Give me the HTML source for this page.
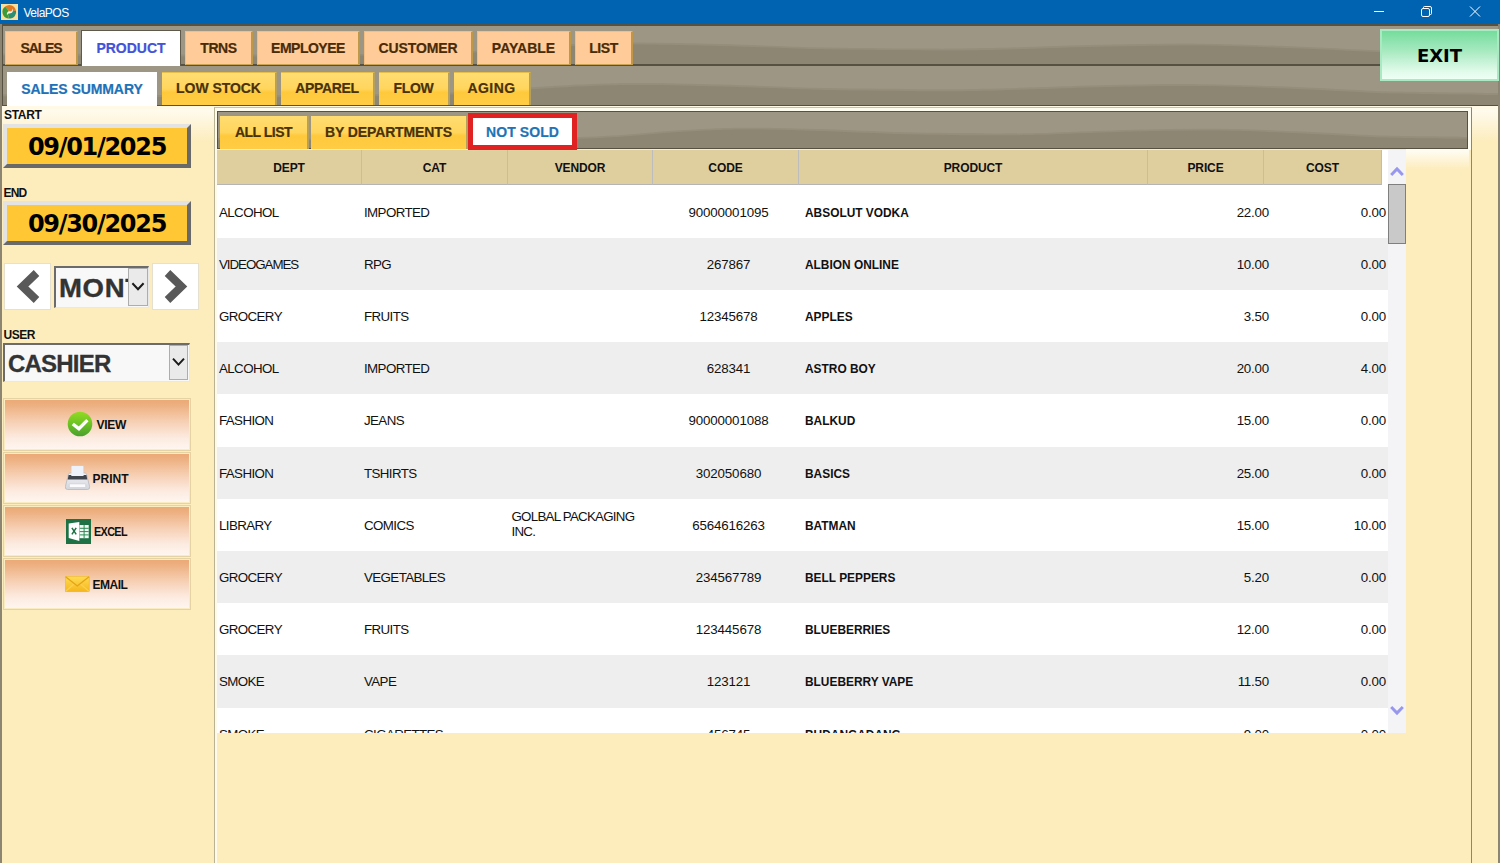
<!DOCTYPE html>
<html>
<head>
<meta charset="utf-8">
<title>VelaPOS</title>
<style>
*{box-sizing:border-box;margin:0;padding:0}
html,body{width:1500px;height:863px;overflow:hidden;background:#FDEDBD;font-family:"Liberation Sans",sans-serif;}
.abs{position:absolute}
#titlebar{position:absolute;left:0;top:0;width:1500px;height:24px;background:#0063B1;color:#fff;font-size:12px;}
#titlebar .ttl{position:absolute;left:23.5px;top:6px;font-size:12px;letter-spacing:-0.5px;}
.strip{position:absolute;overflow:hidden;background:#8D8673;}
.strip svg{position:absolute;left:0;top:0;width:100%;height:100%;}
.tab{position:absolute;font-weight:bold;text-align:center;white-space:nowrap;color:#4A2B08;-webkit-text-stroke:0.2px currentColor;}
.t1{top:31px;height:34px;background:#FFCC99;border-style:solid;border-width:1px 2px 1px 1px;border-color:#F3BE84 #BF9748 #C9A253 #F3BE84;font-size:14px;line-height:33px;}
.t1.sel{background:#fff;border:1px solid #5E594A;border-bottom:none;color:#4353D8;top:30px;height:36px;line-height:35px}
.t2{top:72px;height:33px;background:linear-gradient(#FFDD72 0%,#FFD55C 50%,#FFC93C 60%,#FFCC44 100%);border-right:2px solid #B5A05E;border-top:1px solid #E8BE4A;font-size:14px;line-height:31px;color:#4A3208;}
.t2.sel{background:#fff;color:#1E72B8;border:none;height:34px;line-height:34px}
.t3{top:116px;height:33px;background:linear-gradient(#FFDD72 0%,#FFD55C 50%,#FFC93C 60%,#FFCC44 100%);border-right:2px solid #B5A05E;font-size:14px;line-height:32px;color:#4A3208;}
.lbl{position:absolute;font-weight:bold;font-size:12px;color:#111;letter-spacing:-0.3px}
.datebtn{position:absolute;left:3px;width:188px;height:44px;background:#FFC733;border-style:solid;border-width:4px;border-color:#E3E3E3 #696969 #696969 #E3E3E3;font-family:"DejaVu Sans","Liberation Sans",sans-serif;font-weight:bold;font-size:24px;letter-spacing:-1.3px;text-align:center;line-height:38px;color:#000;}
.navbtn{position:absolute;top:263px;width:47px;height:47px;background:#fff;border:1px solid #E6E0D0;}
.combo{position:absolute;background:#F8F8F8;border-style:solid;border-width:2px 1px 1px 2px;border-color:#6B6B6B #E8E8E8 #E8E8E8 #6B6B6B;overflow:hidden;font-weight:bold;color:#333;white-space:nowrap}
.dd{position:absolute;background:#EAEAEA;border:1px solid #ADADAD;}
.act{position:absolute;left:3px;width:188px;height:52px;border:1px solid #E6D3A3;box-shadow:inset 0 0 0 1px #FBEBC0;background:linear-gradient(#EBA874 0%,#EDB080 12%,#F6D0B4 45%,#FCEADF 75%,#FFF7F2 100%);}
.act span{position:absolute;font-weight:bold;font-size:12px;color:#111;top:19px;transform-origin:0 50%;white-space:nowrap}
#tbl{position:absolute;left:217px;top:150px;width:1189px;height:583px;background:#fff;overflow:hidden;}
.hd{position:absolute;top:0;height:35px;background:#DFCE9E;border-bottom:1px solid #B5B5B5;border-right:1px solid #BDBDBD;font-weight:bold;font-size:12px;letter-spacing:-0.1px;text-align:center;line-height:36px;color:#111}
.row{position:absolute;left:0;width:1171px;height:52px;font-size:13.33px;color:#111;}
.row.g{background:#EEEEEE}
.row div{position:absolute;top:1px;height:52px;line-height:52px;white-space:nowrap}
.c1{left:2px;letter-spacing:-0.6px}.c2{left:147px;letter-spacing:-0.6px}.c3{left:294.5px;line-height:15.4px !important;top:9.5px !important;white-space:normal !important;width:140px;letter-spacing:-0.6px}
.c4{left:438.5px;width:146px;text-align:center;letter-spacing:-0.15px}
.c5{left:587.5px;font-weight:bold;transform:scaleX(0.893);transform-origin:0 50%}
.c6{left:930px;width:122px;text-align:right;letter-spacing:-0.2px}
.c7{left:1046px;width:123px;text-align:right;letter-spacing:-0.2px}
</style>
</head>
<body>
<div id="titlebar">
  <svg class="abs" style="left:1px;top:4px" width="17" height="16" viewBox="0 0 17 16">
    <rect width="17" height="16" fill="#F9DE9C"/>
    <path d="M8.5 8 L4.2 2.6 A6.6 6.6 0 0 1 14.9 6.6 Z" fill="#E27A22"/>
    <path d="M8.5 8 L14.9 6.6 A6.6 6.6 0 0 1 7.2 14.5 Z" fill="#2C8F74"/>
    <path d="M8.5 8 L7.2 14.5 A6.6 6.6 0 0 1 4.2 2.6 Z" fill="#3C9A3A"/>
    <path d="M6.2 11.3 C5.2 8.6 7.2 6.8 9 7.4 C10.6 7.9 11.6 6.4 11.2 4.6 C12.6 6.6 11.6 9.3 9.3 9.2 C7.6 9.1 6.4 9.8 6.2 11.3 Z" fill="#F4F7EC"/>
  </svg>
  <div class="ttl">VelaPOS</div>
  <svg class="abs" style="left:1368px;top:0" width="120" height="24" viewBox="0 0 120 24" fill="none" stroke="#fff" stroke-width="1">
    <path d="M6 11.5 H16"/>
    <rect x="53.5" y="8.5" width="8" height="8" rx="1.5"/>
    <path d="M55.5 8.5 V7.5 Q55.5 6.5 56.5 6.5 H62 Q63.5 6.5 63.5 8 V13.5 Q63.5 14.5 62.5 14.5 H61.5"/>
    <path d="M102 6.5 L112 16.5 M112 6.5 L102 16.5"/>
  </svg>
</div>

<!-- strips -->
<div class="abs" style="left:0;top:24px;width:1500px;height:84px;background:#575142"></div>
<div class="strip" style="left:3px;top:26px;width:1495px;height:38px">
  <svg viewBox="0 0 1000 100" preserveAspectRatio="none"><path d="M0 0 H1000 V74.5 C988 73.8 952 73.0 930 70.5 C908 68.0 890 62.7 868 59.5 C846 56.3 822 52.3 800 51.5 C778 50.7 756 52.7 734 54.5 C712 56.3 686 60.8 667 62.5 C648 64.2 640 64.7 620 64.5 C600 64.3 573 63.5 550 61.5 C527 59.5 502 54.7 480 52.5 C458 50.3 438 48.0 420 48.5 C402 49.0 392 51.2 370 55.5 C348 59.8 327 70.3 290 74.5 C253 78.7 198 80.0 150 80.5 C102 81.0 25 78.0 0 77.5 Z" fill="#9D9684" opacity="0.5"/><path d="M0 0 H1000 V69.5 C988 68.8 952 68.0 930 65.5 C908 63.0 890 57.7 868 54.5 C846 51.3 822 47.3 800 46.5 C778 45.7 756 47.7 734 49.5 C712 51.3 686 55.8 667 57.5 C648 59.2 640 59.7 620 59.5 C600 59.3 573 58.5 550 56.5 C527 54.5 502 49.7 480 47.5 C458 45.3 438 43.0 420 43.5 C402 44.0 392 46.2 370 50.5 C348 54.8 327 65.3 290 69.5 C253 73.7 198 75.0 150 75.5 C102 76.0 25 73.0 0 72.5 Z" fill="#9D9684"/></svg>
</div>
<div class="strip" style="left:3px;top:66px;width:1495px;height:39px">
  <svg viewBox="0 0 1000 100" preserveAspectRatio="none"><path d="M0 0 H1000 V74.5 C988 73.8 952 73.0 930 70.5 C908 68.0 890 62.7 868 59.5 C846 56.3 822 52.3 800 51.5 C778 50.7 756 52.7 734 54.5 C712 56.3 686 60.8 667 62.5 C648 64.2 640 64.7 620 64.5 C600 64.3 573 63.5 550 61.5 C527 59.5 502 54.7 480 52.5 C458 50.3 438 48.0 420 48.5 C402 49.0 392 51.2 370 55.5 C348 59.8 327 70.3 290 74.5 C253 78.7 198 80.0 150 80.5 C102 81.0 25 78.0 0 77.5 Z" fill="#9D9684" opacity="0.5"/><path d="M0 0 H1000 V69.5 C988 68.8 952 68.0 930 65.5 C908 63.0 890 57.7 868 54.5 C846 51.3 822 47.3 800 46.5 C778 45.7 756 47.7 734 49.5 C712 51.3 686 55.8 667 57.5 C648 59.2 640 59.7 620 59.5 C600 59.3 573 58.5 550 56.5 C527 54.5 502 49.7 480 47.5 C458 45.3 438 43.0 420 43.5 C402 44.0 392 46.2 370 50.5 C348 54.8 327 65.3 290 69.5 C253 73.7 198 75.0 150 75.5 C102 76.0 25 73.0 0 72.5 Z" fill="#9D9684"/></svg>
</div>

<!-- top tabs -->
<div class="tab t1" style="left:5px;width:73px;letter-spacing:-1.1px">SALES</div>
<div class="tab t1 sel" style="left:81px;width:100px;letter-spacing:0px">PRODUCT</div>
<div class="tab t1" style="left:185px;width:68px;letter-spacing:-0.45px">TRNS</div>
<div class="tab t1" style="left:257px;width:103px;letter-spacing:-0.5px">EMPLOYEE</div>
<div class="tab t1" style="left:364px;width:109px;letter-spacing:-0.1px">CUSTOMER</div>
<div class="tab t1" style="left:477px;width:94px;letter-spacing:0px">PAYABLE</div>
<div class="tab t1" style="left:575px;width:58px;letter-spacing:-0.45px">LIST</div>

<!-- second tabs -->
<div class="tab t2 sel" style="left:7px;width:150px;letter-spacing:-0.08px">SALES SUMMARY</div>
<div class="tab t2" style="left:162px;width:115px;letter-spacing:-0.05px">LOW STOCK</div>
<div class="tab t2" style="left:281px;width:94px;letter-spacing:-0.33px">APPAREL</div>
<div class="tab t2" style="left:379px;width:71px;letter-spacing:-0.33px">FLOW</div>
<div class="tab t2" style="left:454px;width:77px;letter-spacing:0.4px">AGING</div>


<!-- window borders -->
<div class="abs" style="left:0;top:24px;width:2px;height:839px;background:#8C8571"></div>
<div class="abs" style="left:1498px;top:24px;width:2px;height:839px;background:#8C8571"></div>

<!-- EXIT -->
<div class="abs" style="left:1380px;top:29px;width:119px;height:52px;border:2px solid #A8EBC3;background:linear-gradient(#74DD9C 0%,#A5E9BF 40%,#E2FBEB 85%,#EEFFF4 100%);font-family:'DejaVu Sans','Liberation Sans',sans-serif;font-weight:bold;font-size:18px;text-align:center;line-height:50px;color:#000">EXIT</div>

<!-- body area -->
<div class="abs" style="left:2px;top:106px;width:1496px;height:3px;background:#FFF9E6"></div>
<div class="abs" style="left:2px;top:109px;width:212px;height:32px;background:linear-gradient(#FFFBEF,#FDEDBD)"></div>
<div class="abs" style="left:1472px;top:109px;width:26px;height:32px;background:linear-gradient(#FFFBEF,#FDEDBD)"></div>


<!-- left panel -->
<div class="lbl" style="left:4px;top:108px">START</div>
<div class="datebtn" style="top:124px">09/01/2025</div>
<div class="lbl" style="left:3.5px;top:186px;letter-spacing:-0.8px">END</div>
<div class="datebtn" style="top:201px">09/30/2025</div>

<div class="navbtn" style="left:4px"><svg width="45" height="45" viewBox="0 0 45 45"><path d="M31.5 9 L17.5 22.5 L31.5 36" fill="none" stroke="#595959" stroke-width="8" stroke-linejoin="miter"/></svg></div>
<div class="combo" style="left:54px;top:266px;width:95px;height:42px;font-size:26px;line-height:40px;padding-left:3px;-webkit-text-stroke:0.35px #333"><span style="display:inline-block;transform:scaleX(1.06);transform-origin:0 50%;letter-spacing:0.6px">MONTH</span>
  <div class="dd" style="left:72px;top:0px;width:20px;height:38px"><svg width="18" height="36" viewBox="0 0 18 36"><path d="M3.4 14.2 L9 20.2 L14.6 14.2" fill="none" stroke="#1a1a1a" stroke-width="2"/></svg></div>
</div>
<div class="navbtn" style="left:152px"><svg width="45" height="45" viewBox="0 0 45 45"><path d="M14.5 9 L28.5 22.5 L14.5 36" fill="none" stroke="#595959" stroke-width="8" stroke-linejoin="miter"/></svg></div>

<div class="lbl" style="left:3.5px;top:328px;letter-spacing:-0.5px">USER</div>
<div class="combo" style="left:3px;top:343px;width:187px;height:39px;font-size:24px;line-height:37px;padding-left:3px;letter-spacing:-0.8px;-webkit-text-stroke:0.3px #333">CASHIER
  <div class="dd" style="left:164px;top:0px;width:19px;height:35px"><svg width="17" height="33" viewBox="0 0 17 33"><path d="M3 12.6 L8.5 18.6 L14 12.6" fill="none" stroke="#1a1a1a" stroke-width="2"/></svg></div>
</div>

<div class="act" style="top:398px;height:53px">
  <svg class="abs" style="left:63.3px;top:12.3px" width="26" height="26" viewBox="0 0 26 26"><defs><linearGradient id="gg" x1="0" y1="0" x2="0" y2="1"><stop offset="0" stop-color="#93DB22"/><stop offset="0.5" stop-color="#6CC224"/><stop offset="1" stop-color="#4A9F2E"/></linearGradient></defs><circle cx="13" cy="13" r="12.3" fill="url(#gg)"/><path d="M5.8 13 L11.9 17.7 L20.4 9.1" fill="none" stroke="#fff" stroke-width="3.4"/></svg>
  <span style="left:92.5px;letter-spacing:-0.3px">VIEW</span>
</div>
<div class="act" style="top:452px">
  <svg class="abs" style="left:60.8px;top:12px" width="26" height="26" viewBox="0 0 26 26"><defs><linearGradient id="pg" x1="0" y1="0" x2="0" y2="1"><stop offset="0" stop-color="#F2F3F6"/><stop offset="1" stop-color="#D3D6DC"/></linearGradient></defs><path d="M7 10 L6.2 1.2 Q6.2 0.5 7 0.5 L17.8 0.5 Q18.6 0.5 18.7 1.2 L18.5 10 Z" fill="#ECF0F8" stroke="#C2C7D2" stroke-width="0.8"/><path d="M3.5 9 Q3.8 8 5 8 L20 8 Q21.2 8 21.5 9 L24.6 21.5 Q25 24.5 22.5 24.5 L2.5 24.5 Q0 24.5 0.4 21.5 Z" fill="url(#pg)" stroke="#B3B7C0" stroke-width="0.8"/><path d="M3.6 10 L21.4 10 L22.3 14.5 L2.7 14.5 Z" fill="#41454E"/><path d="M6.5 1.5 L18.3 1.5 L18.6 11 L6.3 11 Z" fill="#EEF2FA"/><rect x="4.3" y="18.8" width="16.4" height="3.8" rx="0.8" fill="#FBFBFD" stroke="#C5C8CF" stroke-width="0.6"/></svg>
  <span style="left:88.5px;top:19px">PRINT</span>
</div>
<div class="act" style="top:505px">
  <svg class="abs" style="left:61.8px;top:12.5px" width="25" height="25" viewBox="0 0 25 25"><rect width="25" height="25" fill="#1E7145"/><rect x="13.5" y="6" width="9.2" height="13.2" fill="#F2FBF4"/><path d="M13.5 9.3 H22.7 M13.5 12.6 H22.7 M13.5 15.9 H22.7 M18.1 6 V19.2" stroke="#2C8A55" stroke-width="1"/><path d="M2.7 4.6 L13.3 3 V21.9 L2.7 18.9 Z" fill="#fff"/><path d="M5.9 8.8 L10.2 15.4 M10.2 8.8 L5.9 15.4" stroke="#1E7145" stroke-width="1.5"/></svg>
  <span style="left:90px;top:19px;letter-spacing:-0.7px;transform:scaleX(0.9)">EXCEL</span>
</div>
<div class="act" style="top:558px">
  <svg class="abs" style="left:61.2px;top:17.2px" width="25" height="16" viewBox="0 0 25 16"><defs><linearGradient id="eg" x1="0" y1="0" x2="0" y2="1"><stop offset="0" stop-color="#FFDC52"/><stop offset="1" stop-color="#F6B61C"/></linearGradient></defs><rect x="0.3" y="0.3" width="24" height="15.4" rx="0.8" fill="url(#eg)" stroke="#EDB02A" stroke-width="0.6"/><path d="M0.8 15.2 L9.5 7.5 M23.8 15.2 L15 7.5" stroke="#FBD050" stroke-width="1.2" fill="none"/><path d="M0.6 0.8 L12.3 10 L24 0.8" stroke="#E3A417" stroke-width="1.3" fill="none"/></svg>
  <span style="left:88.5px;top:19px;letter-spacing:-0.5px">EMAIL</span>
</div>

<!-- inner panel -->
<div class="abs" style="left:214px;top:107px;width:1258px;height:756px;border-style:solid;border-width:1px 1px 0 1px;border-color:#C9C2A2 #8F8868 #8F8868 #B9B293;background:#FDEDBD"></div>
<div class="abs" style="left:215px;top:108px;width:1256px;height:3px;background:#FFFCF0"></div>
<div class="abs" style="left:215px;top:108px;width:2px;height:755px;background:#FFFAEA"></div>
<div class="abs" style="left:1468px;top:108px;width:3px;height:42px;background:#FFFCF0"></div>
<div class="abs" style="left:217px;top:111px;width:1251px;height:38px;background:#575142"></div>
<div class="strip" style="left:218px;top:112px;width:1249px;height:36px">
  <svg viewBox="0 0 1000 100" preserveAspectRatio="none"><path d="M0 0 H1000 V74.5 C988 73.8 952 73.0 930 70.5 C908 68.0 890 62.7 868 59.5 C846 56.3 822 52.3 800 51.5 C778 50.7 756 52.7 734 54.5 C712 56.3 686 60.8 667 62.5 C648 64.2 640 64.7 620 64.5 C600 64.3 573 63.5 550 61.5 C527 59.5 502 54.7 480 52.5 C458 50.3 438 48.0 420 48.5 C402 49.0 392 51.2 370 55.5 C348 59.8 327 70.3 290 74.5 C253 78.7 198 80.0 150 80.5 C102 81.0 25 78.0 0 77.5 Z" fill="#9D9684" opacity="0.5"/><path d="M0 0 H1000 V69.5 C988 68.8 952 68.0 930 65.5 C908 63.0 890 57.7 868 54.5 C846 51.3 822 47.3 800 46.5 C778 45.7 756 47.7 734 49.5 C712 51.3 686 55.8 667 57.5 C648 59.2 640 59.7 620 59.5 C600 59.3 573 58.5 550 56.5 C527 54.5 502 49.7 480 47.5 C458 45.3 438 43.0 420 43.5 C402 44.0 392 46.2 370 50.5 C348 54.8 327 65.3 290 69.5 C253 73.7 198 75.0 150 75.5 C102 76.0 25 73.0 0 72.5 Z" fill="#9D9684"/></svg>
</div>
<div class="tab t3" style="left:220px;width:89px;letter-spacing:-0.5px">ALL LIST</div>
<div class="tab t3" style="left:311px;width:157px;letter-spacing:-0.12px">BY DEPARTMENTS</div>
<div class="tab" style="left:468px;top:113px;width:109px;height:37px;background:#fff;border:5px solid #E02222;font-size:14px;line-height:29px;color:#1F74B6;letter-spacing:0.07px">NOT SOLD</div>

<div class="abs" style="left:1406px;top:149px;width:63px;height:20px;background:linear-gradient(#FFFDF6,#FDEDBD)"></div>

<div id="tbl">
  <div class="hd" style="left:0;width:145px">DEPT</div>
  <div class="hd" style="left:145px;width:146px">CAT</div>
  <div class="hd" style="left:291px;width:145px">VENDOR</div>
  <div class="hd" style="left:436px;width:146px">CODE</div>
  <div class="hd" style="left:582px;width:349px">PRODUCT</div>
  <div class="hd" style="left:931px;width:116px">PRICE</div>
  <div class="hd" style="left:1047px;width:118px">COST</div>

  <div class="row" style="top:36px;height:52px"><div class="c1">ALCOHOL</div><div class="c2">IMPORTED</div><div class="c4">90000001095</div><div class="c5">ABSOLUT VODKA</div><div class="c6">22.00</div><div class="c7">0.00</div></div>
  <div class="row g" style="top:88px;height:52px"><div class="c1" style="letter-spacing:-1.05px">VIDEOGAMES</div><div class="c2">RPG</div><div class="c4">267867</div><div class="c5">ALBION ONLINE</div><div class="c6">10.00</div><div class="c7">0.00</div></div>
  <div class="row" style="top:140px;height:52px"><div class="c1">GROCERY</div><div class="c2">FRUITS</div><div class="c4">12345678</div><div class="c5">APPLES</div><div class="c6">3.50</div><div class="c7">0.00</div></div>
  <div class="row g" style="top:192px;height:52px"><div class="c1">ALCOHOL</div><div class="c2">IMPORTED</div><div class="c4">628341</div><div class="c5">ASTRO BOY</div><div class="c6">20.00</div><div class="c7">4.00</div></div>
  <div class="row" style="top:244px;height:53px"><div class="c1">FASHION</div><div class="c2">JEANS</div><div class="c4">90000001088</div><div class="c5">BALKUD</div><div class="c6">15.00</div><div class="c7">0.00</div></div>
  <div class="row g" style="top:297px;height:52px"><div class="c1">FASHION</div><div class="c2">TSHIRTS</div><div class="c4">302050680</div><div class="c5">BASICS</div><div class="c6">25.00</div><div class="c7">0.00</div></div>
  <div class="row" style="top:349px;height:52px"><div class="c1">LIBRARY</div><div class="c2">COMICS</div><div class="c3" style="letter-spacing:-0.75px">GOLBAL PACKAGING INC.</div><div class="c4">6564616263</div><div class="c5">BATMAN</div><div class="c6">15.00</div><div class="c7">10.00</div></div>
  <div class="row g" style="top:401px;height:52px"><div class="c1">GROCERY</div><div class="c2">VEGETABLES</div><div class="c4">234567789</div><div class="c5">BELL PEPPERS</div><div class="c6">5.20</div><div class="c7">0.00</div></div>
  <div class="row" style="top:453px;height:52px"><div class="c1">GROCERY</div><div class="c2">FRUITS</div><div class="c4">123445678</div><div class="c5">BLUEBERRIES</div><div class="c6">12.00</div><div class="c7">0.00</div></div>
  <div class="row g" style="top:505px;height:53px"><div class="c1">SMOKE</div><div class="c2">VAPE</div><div class="c4">123121</div><div class="c5">BLUEBERRY VAPE</div><div class="c6">11.50</div><div class="c7">0.00</div></div>
  <div class="row" style="top:558px;height:52px"><div class="c1">SMOKE</div><div class="c2">CIGARETTES</div><div class="c4">456745</div><div class="c5">BUDANGADANG</div><div class="c6">9.00</div><div class="c7">0.00</div></div>

  <!-- scrollbar -->
  <div class="abs" style="left:1171px;top:0;width:18px;height:583px;background:#F4F4F7"></div>
  <svg class="abs" style="left:1173px;top:15px" width="14" height="12" viewBox="0 0 14 12"><path d="M1.2 10 L7 4 L12.8 10" fill="none" stroke="#9797EE" stroke-width="3"/></svg>
  <div class="abs" style="left:1171px;top:34px;width:18px;height:60px;background:#C9C9C9;border:1px solid #7F7F7F"></div>
  <svg class="abs" style="left:1173px;top:555px" width="14" height="12" viewBox="0 0 14 12"><path d="M1.2 2 L7 8 L12.8 2" fill="none" stroke="#9797EE" stroke-width="3"/></svg>
</div>

</body>
</html>
